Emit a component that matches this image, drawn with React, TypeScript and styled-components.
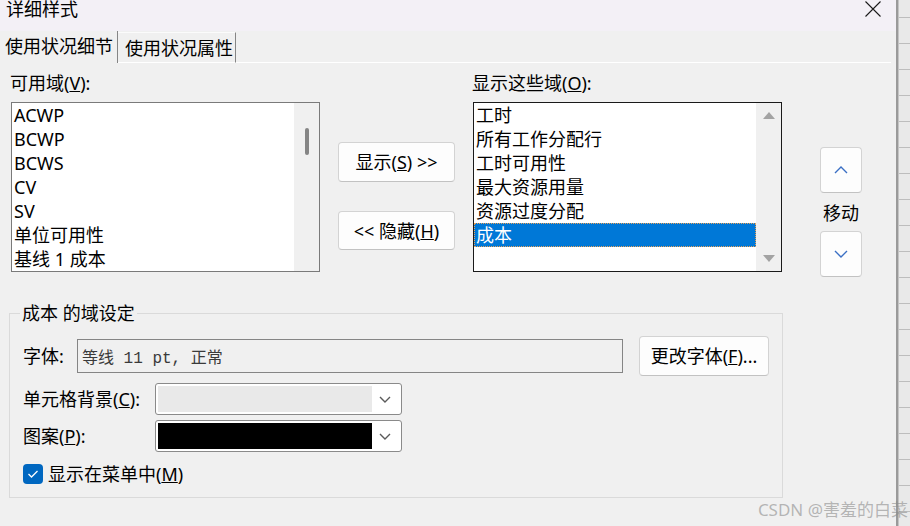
import React from "react";
import styled, { createGlobalStyle } from "styled-components";

const Global = createGlobalStyle`
  html, body { margin: 0; padding: 0; background: #f0f0f0; }
  body {
    font-family: "Noto Sans", "Noto Sans CJK SC", sans-serif;
    font-size: 18px;
    color: #000;
    overflow: hidden;
  }
  * { box-sizing: border-box; }
`;

const Screen = styled.div`
  position: relative;
  display: flex;
  width: 910px;
  height: 526px;
  overflow: hidden;
`;

const Dialog = styled.div`
  width: 898px;
  flex: none;
  display: flex;
  flex-direction: column;
  background: #f0f0f0;
  border-right: 2px solid #9a9a9a;
`;

const SheetEdge = styled.div`
  flex: 1;
  border-left: 1px solid #c4c4c4;
  background-color: #e9e9e9;
  background-image: linear-gradient(to bottom, transparent 0 25px, #bdbdbd 25px 26px);
  background-size: 100% 26px;
  background-position: 0 -8px;
`;

const TitleBar = styled.div`
  height: 31px;
  flex: none;
  display: flex;
  align-items: flex-start;
  justify-content: space-between;
  background: #f3f0f6;
  padding: 0 15px 0 6px;
`;

const TitleText = styled.div`
  line-height: 18px;
  font-size: 18px;
`;

const CloseIcon = styled.svg`
  margin-top: 1px;
  flex: none;
`;

const TabStrip = styled.div`
  height: 32px;
  flex: none;
  display: flex;
  align-items: flex-start;
  padding-right: 5px;
`;

const Tab = styled.div<{ $active?: boolean }>`
  flex: none;
  white-space: nowrap;
  line-height: ${(p) => (p.$active ? "31px" : "25px")};
  height: ${(p) => (p.$active ? "32px" : "31px")};
  padding: ${(p) => (p.$active ? "0 4px 0 5px" : "3px 2px 0 7px")};
  margin-top: ${(p) => (p.$active ? "0" : "1px")};
  border-right: 1px solid #858585;
  border-top: ${(p) => (p.$active ? "none" : "1px solid #fbfbfb")};
  border-bottom: ${(p) => (p.$active ? "none" : "1px solid #ffffff")};
  background: #f0f0f0;
`;

const TabFill = styled.div`
  flex: 1;
  height: 32px;
  border-bottom: 1px solid #ffffff;
`;

const Content = styled.div`
  flex: 1;
  display: flex;
  flex-direction: column;
  padding: 9px 0 0 9px;
`;

const TopRow = styled.div`
  display: flex;
  align-items: flex-start;
  margin-left: 2px;
`;

const ListColumn = styled.div<{ $gapLeft?: number }>`
  width: 309px;
  flex: none;
  display: flex;
  flex-direction: column;
  gap: 8px;
  margin-left: ${(p) => p.$gapLeft ?? 0}px;
`;

const FieldLabel = styled.div`
  line-height: 22px;
  margin-left: -1px;
  white-space: nowrap;
`;

const ListBox = styled.div<{ $focused?: boolean }>`
  height: 170px;
  display: flex;
  background: #ffffff;
  border: 1px solid ${(p) => (p.$focused ? "#1a1a1a" : "#7a7a7a")};
`;

const ListItems = styled.div`
  flex: 1;
  display: flex;
  flex-direction: column;
`;

const ListRow = styled.div<{ $selected?: boolean }>`
  height: 24px;
  line-height: 22px;
  white-space: nowrap;
  padding-left: 1px;
  border: 1px ${(p) => (p.$selected ? "dotted #e8a25a" : "solid transparent")};
  background: ${(p) => (p.$selected ? "#0078d7" : "transparent")};
  color: ${(p) => (p.$selected ? "#ffffff" : "#000000")};
`;

const ScrollTrack = styled.div<{ $arrows?: boolean }>`
  width: 25px;
  flex: none;
  background: #f0f0f0;
  display: flex;
  flex-direction: column;
  align-items: center;
  justify-content: ${(p) => (p.$arrows ? "space-between" : "flex-start")};
  padding: ${(p) => (p.$arrows ? "9px 0 9px 0" : "25px 0 0 0")};
`;

const Thumb = styled.div`
  width: 4px;
  height: 27px;
  border-radius: 2px;
  background: #858585;
  margin-left: 1px;
`;

const MidColumn = styled.div`
  width: 117px;
  flex: none;
  margin-left: 18px;
  padding-top: 70px;
  display: flex;
  flex-direction: column;
  gap: 29px;
`;

const Button = styled.div<{ $h?: number; $w?: number }>`
  height: ${(p) => p.$h ?? 40}px;
  width: ${(p) => (p.$w ? `${p.$w}px` : "auto")};
  flex: none;
  display: flex;
  align-items: center;
  justify-content: center;
  background: #fdfdfd;
  border: 1px solid #d3d3d3;
  border-bottom-color: #c2c2c2;
  border-radius: 4px;
  white-space: nowrap;
  line-height: 22px;
`;

const MoveColumn = styled.div`
  width: 42px;
  flex: none;
  margin-left: 38px;
  padding-top: 75px;
  display: flex;
  flex-direction: column;
  align-items: center;
`;

const MoveLabel = styled.div`
  height: 38px;
  line-height: 40px;
  white-space: nowrap;
`;

const Group = styled.fieldset`
  width: 774px;
  margin: 25px 0 0 0;
  min-width: 0;
  padding: 0 13px 13px 13px;
  border: 1px solid #dadada;
  display: flex;
  flex-direction: column;
`;

const Legend = styled.legend`
  padding: 0 2px;
  margin-left: -3px;
  line-height: 22px;
  font-size: 18px;
`;

const FormRow = styled.div<{ $top: number; $h: number }>`
  display: flex;
  align-items: center;
  margin-top: ${(p) => p.$top}px;
  height: ${(p) => p.$h}px;
`;

const RowLabel = styled.div<{ $w: number }>`
  width: ${(p) => p.$w}px;
  flex: none;
  white-space: nowrap;
  line-height: 22px;
`;

const FontBox = styled.div`
  flex: 1;
  height: 34px;
  border: 1px solid #858585;
  display: flex;
  align-items: center;
  padding-left: 4px;
  font-family: "Liberation Mono", "Noto Sans CJK SC", monospace;
  font-size: 16px;
  color: #3a3a3a;
  white-space: pre;
`;

const Combo = styled.div`
  width: 247px;
  height: 32px;
  flex: none;
  background: #ffffff;
  border: 1px solid #8a8a8a;
  border-radius: 3px;
  padding: 2px;
  display: flex;
  align-items: stretch;
`;

const Swatch = styled.div<{ $color: string }>`
  width: 214px;
  flex: none;
  background: ${(p) => p.$color};
`;

const ComboArrow = styled.div`
  flex: 1;
  display: flex;
  align-items: center;
  justify-content: center;
  padding-right: 2px;
`;

const CheckRow = styled.div`
  display: flex;
  align-items: center;
  gap: 5px;
  margin-top: 12px;
  height: 20px;
`;

const CheckBox = styled.div`
  width: 20px;
  height: 20px;
  flex: none;
  border-radius: 4px;
  background: #0067c0;
  display: flex;
  align-items: center;
  justify-content: center;
`;

const CheckText = styled.div`
  line-height: 22px;
  white-space: nowrap;
`;

const Watermark = styled.div`
  position: absolute;
  right: 2px;
  top: 499px;
  font-size: 17px;
  line-height: 22px;
  color: rgba(140, 140, 140, 0.6);
  white-space: nowrap;
  pointer-events: none;
`;

const Chevron = ({ up, color = "#3a6fc4", w = 14, h = 8 }: { up?: boolean; color?: string; w?: number; h?: number }) => (
  <svg width={w} height={h} viewBox={`0 0 ${w} ${h}`}>
    <polyline
      points={up ? `1,${h - 1} ${w / 2},1 ${w - 1},${h - 1}` : `1,1 ${w / 2},${h - 1} ${w - 1},1`}
      fill="none"
      stroke={color}
      strokeWidth={1.4}
    />
  </svg>
);

const Triangle = ({ up }: { up?: boolean }) => (
  <svg width={12} height={7} viewBox="0 0 12 7">
    <polygon points={up ? "0,7 6,0 12,7" : "0,0 12,0 6,7"} fill="#a3a3a3" />
  </svg>
);

const available = ["ACWP", "BCWP", "BCWS", "CV", "SV", "单位可用性", "基线 1 成本"];
const shown = ["工时", "所有工作分配行", "工时可用性", "最大资源用量", "资源过度分配", "成本"];

export default function App() {
  return (
    <>
      <Global />
      <Screen>
        <Dialog>
          <TitleBar>
            <TitleText>详细样式</TitleText>
            <CloseIcon width={16} height={16} viewBox="0 0 16 16">
              <path d="M0.5 0.5 L15.5 15.5 M15.5 0.5 L0.5 15.5" stroke="#1a1a1a" strokeWidth={1.1} />
            </CloseIcon>
          </TitleBar>
          <TabStrip>
            <Tab $active>使用状况细节</Tab>
            <Tab>使用状况属性</Tab>
            <TabFill />
          </TabStrip>
          <Content>
            <TopRow>
              <ListColumn>
                <FieldLabel>
                  可用域(<u>V</u>):
                </FieldLabel>
                <ListBox>
                  <ListItems>
                    {available.map((t) => (
                      <ListRow key={t}>{t}</ListRow>
                    ))}
                  </ListItems>
                  <ScrollTrack>
                    <Thumb />
                  </ScrollTrack>
                </ListBox>
              </ListColumn>
              <MidColumn>
                <Button $h={40}>
                  显示(<u>S</u>) &gt;&gt;
                </Button>
                <Button $h={39}>
                  &lt;&lt; 隐藏(<u>H</u>)
                </Button>
              </MidColumn>
              <ListColumn $gapLeft={18}>
                <FieldLabel>
                  显示这些域(<u>O</u>):
                </FieldLabel>
                <ListBox $focused>
                  <ListItems>
                    {shown.map((t) => (
                      <ListRow key={t} $selected={t === "成本"}>
                        {t}
                      </ListRow>
                    ))}
                  </ListItems>
                  <ScrollTrack $arrows>
                    <Triangle up />
                    <Triangle />
                  </ScrollTrack>
                </ListBox>
              </ListColumn>
              <MoveColumn>
                <Button $h={46} $w={42}>
                  <Chevron up />
                </Button>
                <MoveLabel>移动</MoveLabel>
                <Button $h={46} $w={42}>
                  <Chevron />
                </Button>
              </MoveColumn>
            </TopRow>
            <Group>
              <Legend>成本 的域设定</Legend>
              <FormRow $top={12} $h={40}>
                <RowLabel $w={54}>字体:</RowLabel>
                <FontBox>等线 11 pt, 正常</FontBox>
                <Button $h={40} $w={130} style={{ marginLeft: 16 }}>
                  更改字体(<u>F</u>)...
                </Button>
              </FormRow>
              <FormRow $top={7} $h={32}>
                <RowLabel $w={132}>
                  单元格背景(<u>C</u>):
                </RowLabel>
                <Combo>
                  <Swatch $color="#e9e9e9" />
                  <ComboArrow>
                    <Chevron color="#5a5a5a" w={12} h={7} />
                  </ComboArrow>
                </Combo>
              </FormRow>
              <FormRow $top={5} $h={32}>
                <RowLabel $w={132}>
                  图案(<u>P</u>):
                </RowLabel>
                <Combo>
                  <Swatch $color="#000000" />
                  <ComboArrow>
                    <Chevron color="#5a5a5a" w={12} h={7} />
                  </ComboArrow>
                </Combo>
              </FormRow>
              <CheckRow>
                <CheckBox>
                  <svg width={12} height={10} viewBox="0 0 12 10">
                    <polyline points="1.5,5 4.5,8 10.5,2" fill="none" stroke="#ffffff" strokeWidth={1.3} />
                  </svg>
                </CheckBox>
                <CheckText>
                  显示在菜单中(<u>M</u>)
                </CheckText>
              </CheckRow>
            </Group>
          </Content>
        </Dialog>
        <SheetEdge />
        <Watermark>CSDN @害羞的白菜</Watermark>
      </Screen>
    </>
  );
}
